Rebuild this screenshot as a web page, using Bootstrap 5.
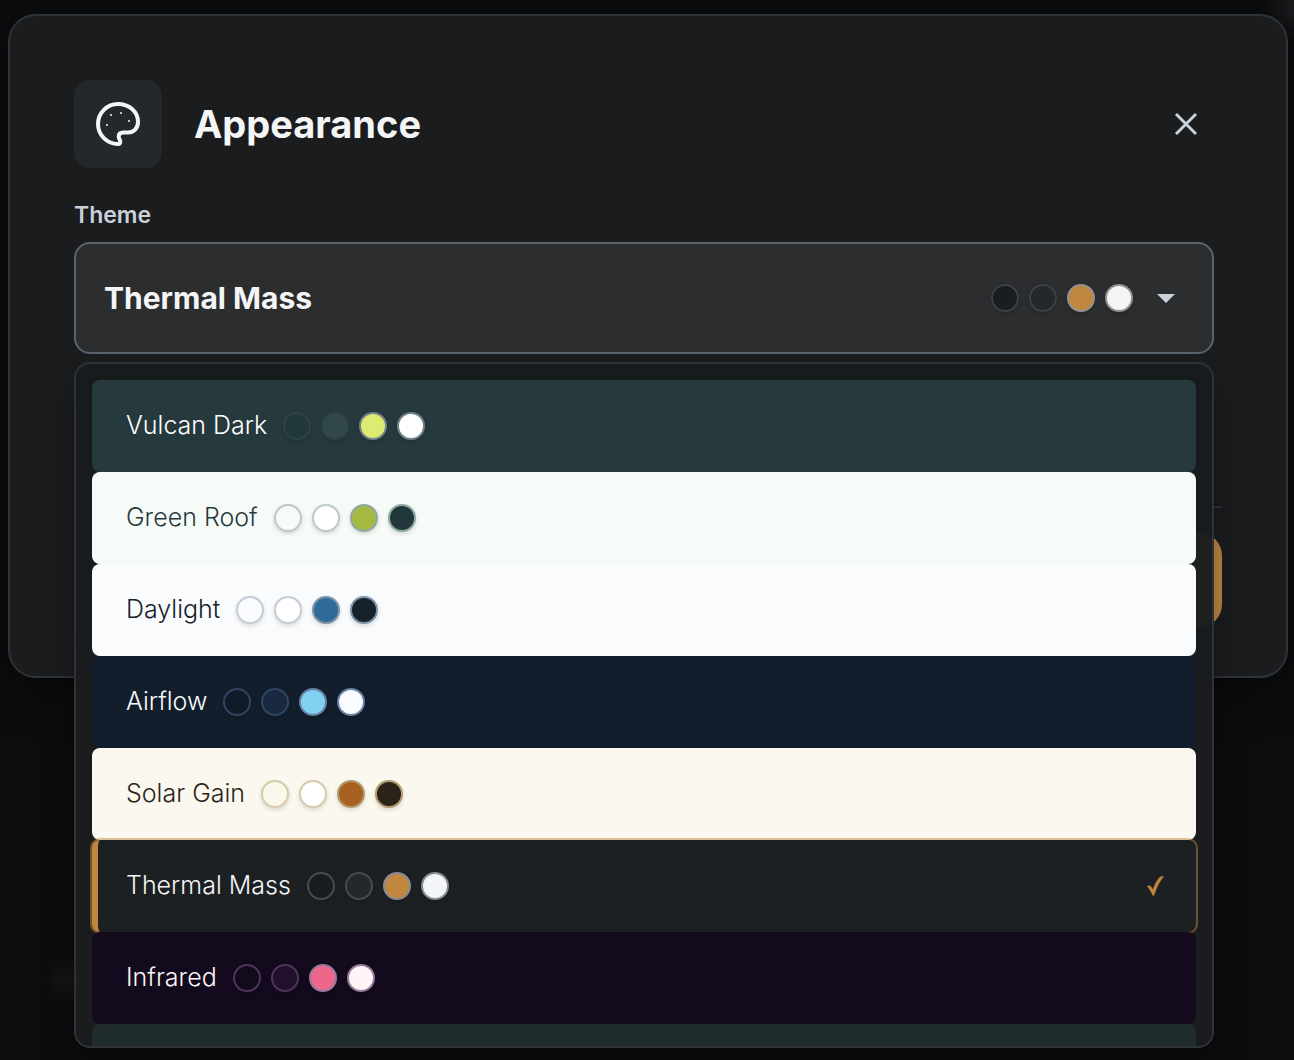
<!DOCTYPE html>
<html lang="en" data-bs-theme="dark">
<head>
<meta charset="utf-8">
<meta name="viewport" content="width=device-width, initial-scale=1">
<title>Appearance</title>
<link href="https://cdn.jsdelivr.net/npm/bootstrap@5.3.0/dist/css/bootstrap.min.css" rel="stylesheet">
<style>
  body {
    min-height: 100vh;
    overflow: hidden;
    font-family: Inter, "Liberation Sans", sans-serif;
    padding: 14px 6px 0 8px;
    background:
      radial-gradient(circle at 100% 10px, #1b1c1f 0, transparent 32px),
      radial-gradient(circle at 68px 980px, #141617 0, transparent 24px),
      #0b0d0e;
  }
  .panel {
    background: #1b1c1e;
    border: 2px solid #2f3237;
    border-radius: 28px;
    padding: 64px 64px 48px;
    box-shadow: 0 8px 48px rgba(0, 0, 0, .5);
  }
  .panel-icon {
    width: 88px;
    height: 88px;
    border-radius: 16px;
    background: #24282b;
    color: #f4f5f7;
  }
  .panel-title { font-size: 38px; line-height: 48px; color: #f4f5f7; }
  .close-btn { width: 72px; height: 72px; color: #c9d1db; }
  .field { margin-right: 8px; }
  .field-label { font-size: 23px; line-height: 30px; color: #c9d1db; }
  .picker {
    height: 112px;
    padding: 0 37px 0 28px;
    border: 2px solid #5a6270;
    border-radius: 16px;
    background: #2c2d2f;
    color: #f4f5f7;
    font-size: 30px;
  }
  .caret {
    border: 9px solid transparent;
    border-top-color: #c9d1db;
    border-bottom: 0;
  }
  .menu {
    top: calc(100% + 8px);
    max-height: 686px;
    padding: 16px;
    overflow: hidden;
    border: 2px solid #2f3237;
    border-radius: 16px;
    background: linear-gradient(rgba(23, 27, 30, .96) 250px, rgba(27, 28, 30, .98) 350px);
    box-shadow: 0 16px 32px rgba(0, 0, 0, .35);
  }
  .choice {
    flex: none;
    height: 92px;
    padding: 0 32px 0 28px;
    border: 0;
    border-left: 6px solid var(--bg);
    border-radius: 8px;
    background: var(--bg);
    color: var(--fg);
    font-size: 25px;
    font-weight: 300;
  }
  .choice-on {
    border-left-color: #c1873f;
    box-shadow: 0 0 0 2px rgba(193, 135, 63, .5);
  }
  .tick { color: #c1873f; }
  .dots { gap: 10px; --ring: #454b54; }
  .dot {
    width: 28px;
    height: 28px;
    border-radius: 50%;
    border: 2px solid var(--ring);
    box-shadow: 0 2px 4px rgba(0, 0, 0, .14);
  }
  .rule { margin: 152px 0 24px; border-top: 2px solid #2f3237; }
  .save-btn { width: 200px; height: 96px; border: 0; border-radius: 24px; background: #c1873f; }
</style>
<script src="https://cdn.jsdelivr.net/npm/bootstrap@5.3.0/dist/js/bootstrap.bundle.min.js"></script>
</head>
<body>
<main class="panel" role="dialog" aria-labelledby="title">
  <header class="d-flex align-items-center mb-4 pb-2">
    <span class="panel-icon d-flex align-items-center justify-content-center">
      <svg width="48" height="48" viewBox="0 0 24 24" fill="none" stroke="currentColor" stroke-width="2" stroke-linecap="round" stroke-linejoin="round" aria-hidden="true">
        <path d="M12 2C6.500 2 2 6.500 2 12s4.500 10 10 10c.93 0 1.250-.75 1.100-1.500-.1-.7-.75-1.300-.75-2.100 0-1.300.9-2.100 2.300-2.100h2.200c3.050 0 5.150-2.200 5.150-5.250C22 5.700 17.460 2 12 2z"/>
        <g fill="currentColor" stroke="none"><circle cx="13.500" cy="6.500" r=".5"/><circle cx="17.500" cy="10.500" r=".5"/><circle cx="8.500" cy="7.500" r=".5"/><circle cx="6.500" cy="12.500" r=".5"/></g>
      </svg>
    </span>
    <h1 id="title" class="panel-title fw-bold mb-0 ms-3 ps-3">Appearance</h1>
    <button type="button" class="close-btn btn border-0 p-0 ms-auto d-flex align-items-center justify-content-center" aria-label="Close">
      <svg width="24" height="24" viewBox="0 0 24 24" fill="none" stroke="currentColor" stroke-width="3" aria-hidden="true"><path d="M2 2l20 20M22 2L2 22"/></svg>
    </button>
  </header>

  <div class="field position-relative">
    <label class="field-label fw-semibold d-block mb-2 pb-1" for="theme">Theme</label>
    <button type="button" id="theme" class="picker w-100 d-flex align-items-center fw-bold" aria-haspopup="listbox" aria-expanded="true">
      <span>Thermal Mass</span>
      <span class="dots d-flex ms-auto me-4" data-dots="#1b1c1e #24282b #c1873f #f4f5f7" data-ring="#3c4048"></span>
      <span class="caret"></span>
    </button>
    <div id="menu" class="menu position-absolute start-0 w-100 d-flex flex-column" role="listbox" aria-label="Theme"></div>
  </div>

  <div class="rule"></div>
  <div class="d-flex justify-content-end"><button type="button" class="save-btn" aria-label="Done"></button></div>
</main>

<script>
  const themes = [
    { name: "Vulcan Dark", bg: "#26393d", fg: "#ffffff", ring: "#2e4347", dots: ["#22373a", "#31474c", "#deeb73", "#ffffff"], light: "#70828a" },
    { name: "Green Roof", bg: "#f6fbf8", fg: "#26393d", ring: "#bccbc6", dots: ["#f6fbf8", "#ffffff", "#a6b943", "#22373a"], light: "#8fa8a2" },
    { name: "Daylight", bg: "#fafbfd", fg: "#15212b", ring: "#c3cdd8", dots: ["#fafbfe", "#ffffff", "#2e6b99", "#15212b"], light: "#7d93a8" },
    { name: "Airflow", bg: "#121e2c", fg: "#f8fafc", ring: "#304561", dots: ["#111a29", "#1a2942", "#80d2f0", "#fafbff"], light: "#6680a3" },
    { name: "Solar Gain", bg: "#fbf8ef", fg: "#2b2318", ring: "#d8cbab", dots: ["#faf7eb", "#ffffff", "#a86121", "#2b2318"], light: "#b09a6d" },
    { name: "Thermal Mass", bg: "#1d2022", fg: "#f4f5f7", ring: "#454b54", dots: ["#1b1c1e", "#24282b", "#c1873f", "#f4f5f7"], light: "#858a94", on: true },
    { name: "Infrared", bg: "#130a1e", fg: "#fff5f7", ring: "#4e365a", dots: ["#130a1e", "#21112c", "#ee668a", "#fff5f7"], light: "#967a9c" },
    { name: "", bg: "#202b2b", fg: "#ffffff", ring: "#2e4347", dots: [] }
  ];

  function fillDots(holder, colors, ring, light) {
    holder.style.setProperty("--ring", ring);
    colors.forEach((color, i) => {
      const dot = document.createElement("span");
      dot.className = "dot";
      dot.style.backgroundColor = color;
      if (i > 1) dot.style.borderColor = light;
      holder.append(dot);
    });
  }

  const current = document.querySelector("[data-dots]");
  fillDots(current, current.dataset.dots.split(" "), current.dataset.ring, "#92928f");

  const menu = document.getElementById("menu");
  for (const t of themes) {
    const row = document.createElement("button");
    row.type = "button";
    row.className = "choice w-100 d-flex align-items-center" + (t.on ? " choice-on" : "");
    row.setAttribute("role", "option");
    row.setAttribute("aria-selected", String(!!t.on));
    row.style.setProperty("--bg", t.bg);
    row.style.setProperty("--fg", t.fg);
    const name = document.createElement("span");
    name.textContent = t.name;
    const dots = document.createElement("span");
    dots.className = "dots d-flex ms-3";
    fillDots(dots, t.dots, t.ring, t.light);
    row.append(name, dots);
    if (t.on) {
      row.insertAdjacentHTML("beforeend", '<svg class="tick ms-auto" width="17" height="20" viewBox="0 0 17 20" fill="currentColor" stroke="currentColor" stroke-width=".6" aria-hidden="true"><path d="M.4 10.500C1 9.500 2.800 9.300 3.700 10.500L6 14C8 8 11 2.500 13.700.8C14.700.4 16 .3 16.700.6C12.500 5 9.200 12 7 19.300H5.800C4.500 16 2.500 12.500.4 10.500z"/></svg>');
    }
    menu.append(row);
  }
</script>
</body>
</html>
